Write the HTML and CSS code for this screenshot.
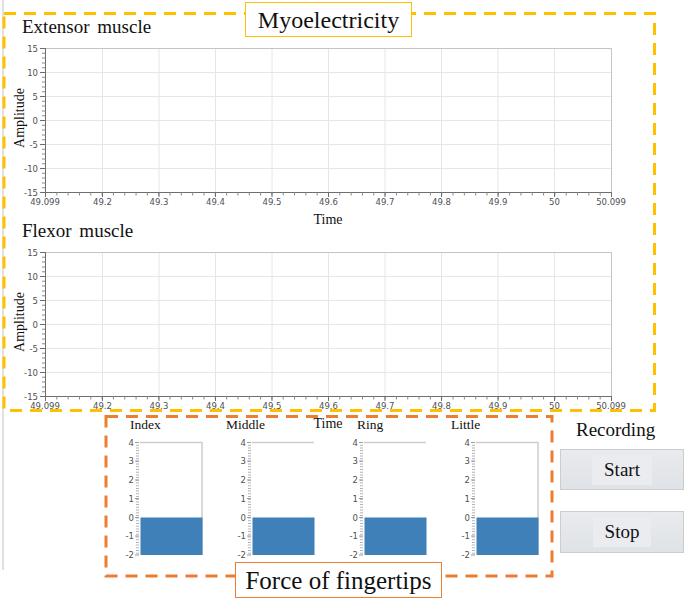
FILE: index.html
```html
<!DOCTYPE html>
<html lang="en">
<head>
<meta charset="utf-8">
<title>Myoelectricity monitor</title>
<link rel="stylesheet" href="styles.css">
</head>
<body>
<div class="app">
  <section class="monitor">
    <div class="chart">
      <div class="chart-title">Extensor muscle</div>
      <svg class="plot" width="650" height="174" viewBox="0 0 650 174">
        <g class="grid">
          <line x1="45" y1="35.5" x2="611" y2="35.5"/><line x1="45" y1="59.5" x2="611" y2="59.5"/><line x1="45" y1="83.5" x2="611" y2="83.5"/><line x1="45" y1="107.5" x2="611" y2="107.5"/><line x1="45" y1="131.5" x2="611" y2="131.5"/>
          <line x1="102.5" y1="11" x2="102.5" y2="155"/><line x1="159" y1="11" x2="159" y2="155"/><line x1="215.5" y1="11" x2="215.5" y2="155"/><line x1="272" y1="11" x2="272" y2="155"/><line x1="328.5" y1="11" x2="328.5" y2="155"/><line x1="385" y1="11" x2="385" y2="155"/><line x1="441.5" y1="11" x2="441.5" y2="155"/><line x1="498" y1="11" x2="498" y2="155"/><line x1="554.5" y1="11" x2="554.5" y2="155"/>
        </g>
        <g class="frame"><line x1="45" y1="11.5" x2="611" y2="11.5"/><line x1="611.5" y1="11" x2="611.5" y2="155"/></g>
        <g class="axis">
          <line x1="45.5" y1="11" x2="45.5" y2="155.5"/><line x1="45" y1="155.5" x2="612" y2="155.5"/>
          <line class="minor-y" x1="43.5" y1="11" x2="43.5" y2="155"/>
          <line class="minor-x" x1="45" y1="157" x2="611" y2="157"/>
          <line x1="40" y1="11.5" x2="45" y2="11.5"/><line x1="40" y1="35.5" x2="45" y2="35.5"/><line x1="40" y1="59.5" x2="45" y2="59.5"/><line x1="40" y1="83.5" x2="45" y2="83.5"/><line x1="40" y1="107.5" x2="45" y2="107.5"/><line x1="40" y1="131.5" x2="45" y2="131.5"/><line x1="40" y1="155.5" x2="45" y2="155.5"/>
          <line x1="45.5" y1="155" x2="45.5" y2="160"/><line x1="102.5" y1="155" x2="102.5" y2="160"/><line x1="159" y1="155" x2="159" y2="160"/><line x1="215.5" y1="155" x2="215.5" y2="160"/><line x1="272" y1="155" x2="272" y2="160"/><line x1="328.5" y1="155" x2="328.5" y2="160"/><line x1="385" y1="155" x2="385" y2="160"/><line x1="441.5" y1="155" x2="441.5" y2="160"/><line x1="498" y1="155" x2="498" y2="160"/><line x1="554.5" y1="155" x2="554.5" y2="160"/><line x1="611.5" y1="155" x2="611.5" y2="160"/>
        </g>
        <g class="ticks ticks-y">
          <text x="38" y="14.5">15</text><text x="38" y="38.5">10</text><text x="38" y="62.5">5</text><text x="38" y="86.5">0</text><text x="38" y="110.5">-5</text><text x="38" y="134.5">-10</text><text x="38" y="158.5">-15</text>
        </g>
        <g class="ticks ticks-x">
          <text x="45" y="168">49.099</text><text x="102.5" y="168">49.2</text><text x="159" y="168">49.3</text><text x="215.5" y="168">49.4</text><text x="272" y="168">49.5</text><text x="328.5" y="168">49.6</text><text x="385" y="168">49.7</text><text x="441.5" y="168">49.8</text><text x="498" y="168">49.9</text><text x="554.5" y="168">50</text><text x="611" y="168">50.099</text>
        </g>
        <text class="axis-title" x="328" y="187" text-anchor="middle">Time</text>
        <text class="axis-title" transform="translate(24 81) rotate(-90)" text-anchor="middle">Amplitude</text>
      </svg>
    </div>
    <div class="chart chart-second">
      <div class="chart-title">Flexor muscle</div>
      <svg class="plot" width="650" height="174" viewBox="0 0 650 174">
        <g class="grid">
          <line x1="45" y1="35.5" x2="611" y2="35.5"/><line x1="45" y1="59.5" x2="611" y2="59.5"/><line x1="45" y1="83.5" x2="611" y2="83.5"/><line x1="45" y1="107.5" x2="611" y2="107.5"/><line x1="45" y1="131.5" x2="611" y2="131.5"/>
          <line x1="102.5" y1="11" x2="102.5" y2="155"/><line x1="159" y1="11" x2="159" y2="155"/><line x1="215.5" y1="11" x2="215.5" y2="155"/><line x1="272" y1="11" x2="272" y2="155"/><line x1="328.5" y1="11" x2="328.5" y2="155"/><line x1="385" y1="11" x2="385" y2="155"/><line x1="441.5" y1="11" x2="441.5" y2="155"/><line x1="498" y1="11" x2="498" y2="155"/><line x1="554.5" y1="11" x2="554.5" y2="155"/>
        </g>
        <g class="frame"><line x1="45" y1="11.5" x2="611" y2="11.5"/><line x1="611.5" y1="11" x2="611.5" y2="155"/></g>
        <g class="axis">
          <line x1="45.5" y1="11" x2="45.5" y2="155.5"/><line x1="45" y1="155.5" x2="612" y2="155.5"/>
          <line class="minor-y" x1="43.5" y1="11" x2="43.5" y2="155"/>
          <line class="minor-x" x1="45" y1="157" x2="611" y2="157"/>
          <line x1="40" y1="11.5" x2="45" y2="11.5"/><line x1="40" y1="35.5" x2="45" y2="35.5"/><line x1="40" y1="59.5" x2="45" y2="59.5"/><line x1="40" y1="83.5" x2="45" y2="83.5"/><line x1="40" y1="107.5" x2="45" y2="107.5"/><line x1="40" y1="131.5" x2="45" y2="131.5"/><line x1="40" y1="155.5" x2="45" y2="155.5"/>
          <line x1="45.5" y1="155" x2="45.5" y2="160"/><line x1="102.5" y1="155" x2="102.5" y2="160"/><line x1="159" y1="155" x2="159" y2="160"/><line x1="215.5" y1="155" x2="215.5" y2="160"/><line x1="272" y1="155" x2="272" y2="160"/><line x1="328.5" y1="155" x2="328.5" y2="160"/><line x1="385" y1="155" x2="385" y2="160"/><line x1="441.5" y1="155" x2="441.5" y2="160"/><line x1="498" y1="155" x2="498" y2="160"/><line x1="554.5" y1="155" x2="554.5" y2="160"/><line x1="611.5" y1="155" x2="611.5" y2="160"/>
        </g>
        <g class="ticks ticks-y">
          <text x="38" y="14.5">15</text><text x="38" y="38.5">10</text><text x="38" y="62.5">5</text><text x="38" y="86.5">0</text><text x="38" y="110.5">-5</text><text x="38" y="134.5">-10</text><text x="38" y="158.5">-15</text>
        </g>
        <g class="ticks ticks-x">
          <text x="45" y="168">49.099</text><text x="102.5" y="168">49.2</text><text x="159" y="168">49.3</text><text x="215.5" y="168">49.4</text><text x="272" y="168">49.5</text><text x="328.5" y="168">49.6</text><text x="385" y="168">49.7</text><text x="441.5" y="168">49.8</text><text x="498" y="168">49.9</text><text x="554.5" y="168">50</text><text x="611" y="168">50.099</text>
        </g>
        <text class="axis-title" x="328" y="187" text-anchor="middle">Time</text>
        <text class="axis-title" transform="translate(24 81) rotate(-90)" text-anchor="middle">Amplitude</text>
      </svg>
    </div>
  </section>

  <section class="bottom">
    <div class="force">
      <svg class="bar" width="100" height="145" viewBox="0 0 100 145">
        <text class="bar-label" x="16" y="14">Index</text>
        <line class="bar-dots" x1="23.5" y1="27" x2="23.5" y2="140"/>
        <g class="bar-ticks"><line x1="21" y1="27.5" x2="25" y2="27.5"/><line x1="21" y1="46" x2="25" y2="46"/><line x1="21" y1="65" x2="25" y2="65"/><line x1="21" y1="83.5" x2="25" y2="83.5"/><line x1="21" y1="102.5" x2="25" y2="102.5"/><line x1="21" y1="121" x2="25" y2="121"/><line x1="21" y1="140" x2="25" y2="140"/></g>
        <g class="ticks ticks-y"><text x="20" y="30.5">4</text><text x="20" y="49">3</text><text x="20" y="68">2</text><text x="20" y="86.5">1</text><text x="20" y="105.5">0</text><text x="20" y="124">-1</text><text x="20" y="143">-2</text></g>
        <g class="bar-frame"><line x1="26" y1="27.5" x2="88" y2="27.5"/><line x1="88" y1="27" x2="88" y2="140"/></g>
        <rect class="bar-fill" x="26.5" y="102.5" width="62" height="37.5"/>
      </svg>
      <svg class="bar" width="100" height="145" viewBox="0 0 100 145">
        <text class="bar-label" x="0" y="14">Middle</text>
        <line class="bar-dots" x1="23.5" y1="27" x2="23.5" y2="140"/>
        <g class="bar-ticks"><line x1="21" y1="27.5" x2="25" y2="27.5"/><line x1="21" y1="46" x2="25" y2="46"/><line x1="21" y1="65" x2="25" y2="65"/><line x1="21" y1="83.5" x2="25" y2="83.5"/><line x1="21" y1="102.5" x2="25" y2="102.5"/><line x1="21" y1="121" x2="25" y2="121"/><line x1="21" y1="140" x2="25" y2="140"/></g>
        <g class="ticks ticks-y"><text x="20" y="30.5">4</text><text x="20" y="49">3</text><text x="20" y="68">2</text><text x="20" y="86.5">1</text><text x="20" y="105.5">0</text><text x="20" y="124">-1</text><text x="20" y="143">-2</text></g>
        <g class="bar-frame"><line x1="26" y1="27.5" x2="88" y2="27.5"/></g>
        <rect class="bar-fill" x="26.5" y="102.5" width="62" height="37.5"/>
      </svg>
      <svg class="bar" width="100" height="145" viewBox="0 0 100 145">
        <text class="bar-label" x="19" y="14">Ring</text>
        <line class="bar-dots" x1="23.5" y1="27" x2="23.5" y2="140"/>
        <g class="bar-ticks"><line x1="21" y1="27.5" x2="25" y2="27.5"/><line x1="21" y1="46" x2="25" y2="46"/><line x1="21" y1="65" x2="25" y2="65"/><line x1="21" y1="83.5" x2="25" y2="83.5"/><line x1="21" y1="102.5" x2="25" y2="102.5"/><line x1="21" y1="121" x2="25" y2="121"/><line x1="21" y1="140" x2="25" y2="140"/></g>
        <g class="ticks ticks-y"><text x="20" y="30.5">4</text><text x="20" y="49">3</text><text x="20" y="68">2</text><text x="20" y="86.5">1</text><text x="20" y="105.5">0</text><text x="20" y="124">-1</text><text x="20" y="143">-2</text></g>
        <g class="bar-frame"><line x1="26" y1="27.5" x2="88" y2="27.5"/></g>
        <rect class="bar-fill" x="26.5" y="102.5" width="62" height="37.5"/>
      </svg>
      <svg class="bar" width="100" height="145" viewBox="0 0 100 145">
        <text class="bar-label" x="1" y="14">Little</text>
        <line class="bar-dots" x1="23.5" y1="27" x2="23.5" y2="140"/>
        <g class="bar-ticks"><line x1="21" y1="27.5" x2="25" y2="27.5"/><line x1="21" y1="46" x2="25" y2="46"/><line x1="21" y1="65" x2="25" y2="65"/><line x1="21" y1="83.5" x2="25" y2="83.5"/><line x1="21" y1="102.5" x2="25" y2="102.5"/><line x1="21" y1="121" x2="25" y2="121"/><line x1="21" y1="140" x2="25" y2="140"/></g>
        <g class="ticks ticks-y"><text x="20" y="30.5">4</text><text x="20" y="49">3</text><text x="20" y="68">2</text><text x="20" y="86.5">1</text><text x="20" y="105.5">0</text><text x="20" y="124">-1</text><text x="20" y="143">-2</text></g>
        <g class="bar-frame"><line x1="26" y1="27.5" x2="88" y2="27.5"/><line x1="88" y1="27" x2="88" y2="140"/></g>
        <rect class="bar-fill" x="26.5" y="102.5" width="62" height="37.5"/>
      </svg>
    </div>
    <div class="recording">
      <div class="recording-title">Recording</div>
      <button class="btn" type="button"><span class="btn-face">Start</span></button>
      <button class="btn btn-stop" type="button"><span class="btn-face">Stop</span></button>
    </div>
  </section>

  <svg class="annotations" width="685" height="601" viewBox="0 0 685 601">
    <rect class="box-myo" x="4" y="13.5" width="650.5" height="397"/>
    <rect class="box-force" x="106" y="416.5" width="446" height="159.5"/>
  </svg>
  <div class="callout callout-myo">Myoelectricity</div>
  <div class="callout callout-force">Force of fingertips</div>
</div>
</body>
</html>
```

FILE: styles.css
```css
* { box-sizing: border-box; }

html, body {
  margin: 0;
  padding: 0;
  background: #ffffff;
}

.app {
  position: relative;
  width: 685px;
  height: 601px;
  overflow: hidden;
  background: #ffffff;
  font-family: "Liberation Serif", "Times New Roman", serif;
  color: #111111;
}

.app::before {
  content: "";
  position: absolute;
  left: 2px;
  top: 0;
  width: 2px;
  height: 570px;
  background: #e0e0e0;
}

.monitor {
  padding-top: 17px;
}

.chart-second {
  margin-top: 10px;
}

.chart-title {
  margin-left: 22px;
  font-size: 19px;
  line-height: 20px;
  height: 20px;
  word-spacing: 3px;
  color: #111111;
}

.plot {
  display: block;
  overflow: visible;
}

.grid line {
  stroke: #e6e6e6;
  stroke-width: 1;
}

.frame line {
  stroke: #c4c4c4;
  stroke-width: 1;
}

.axis line {
  stroke: #6e6e6e;
  stroke-width: 1;
}

.axis .minor-y {
  stroke: #8a8a8a;
  stroke-width: 3;
  stroke-dasharray: 1 3.8;
}

.axis .minor-x {
  stroke: #8a8a8a;
  stroke-width: 3;
  stroke-dasharray: 1 10.32;
}

.ticks text {
  font-family: "DejaVu Sans", Verdana, sans-serif;
  font-size: 8.5px;
  fill: #4f4f55;
}

.ticks-y text {
  text-anchor: end;
}

.ticks-x text {
  text-anchor: middle;
}

.axis-title {
  font-family: "Liberation Serif", "Times New Roman", serif;
  font-size: 14px;
  fill: #111111;
}

.bottom {
  display: flex;
  align-items: flex-start;
}

.force {
  display: flex;
  gap: 12px;
  padding-left: 114px;
}

.bar {
  display: block;
  overflow: visible;
}

.bar-label {
  font-family: "Liberation Serif", "Times New Roman", serif;
  font-size: 13.5px;
  fill: #111111;
}

.bar-dots {
  stroke: #b4b4b4;
  stroke-width: 3;
  stroke-dasharray: 1 1.7;
}

.bar-ticks line {
  stroke: #9a9a9a;
  stroke-width: 1;
}

.bar-frame line {
  stroke: #cdcdcd;
  stroke-width: 1.5;
}

.bar-fill {
  fill: #3f80b9;
}

.recording {
  width: 124px;
  margin-left: 10px;
  padding-top: 4px;
}

.recording-title {
  padding-left: 16px;
  font-size: 19px;
  line-height: 22px;
  color: #111111;
}

.btn {
  display: flex;
  align-items: center;
  justify-content: center;
  width: 124px;
  height: 41px;
  margin-top: 8px;
  padding: 0;
  border: 1px solid #cbcdd0;
  background: linear-gradient(#e9ebee, #dfe2e6);
  font-family: "Liberation Serif", "Times New Roman", serif;
  font-size: 19px;
  color: #111111;
}

.btn-stop {
  margin-top: 21px;
  height: 42px;
}

.btn-face {
  padding: 4px 12px;
  background: #eaecef;
  line-height: 22px;
}

.annotations {
  position: absolute;
  left: 0;
  top: 0;
  pointer-events: none;
}

.annotations rect {
  fill: none;
  stroke-width: 3;
  stroke-dasharray: 12 8;
}

.box-myo {
  stroke: #ffc000;
}

.box-force {
  stroke: #ed7d31;
}

.callout {
  position: absolute;
  display: flex;
  align-items: center;
  justify-content: center;
  background: #ffffff;
  color: #111111;
  border-width: 1.5px;
  border-style: solid;
  line-height: 1;
}

.callout-myo {
  left: 245px;
  top: 2px;
  width: 167px;
  height: 35px;
  border-color: #ffc000;
  font-size: 24px;
  padding-top: 1px;
}

.callout-force {
  left: 235px;
  top: 562px;
  width: 207px;
  height: 36px;
  border-color: #ed7d31;
  font-size: 25px;
  padding-top: 1px;
}
```
